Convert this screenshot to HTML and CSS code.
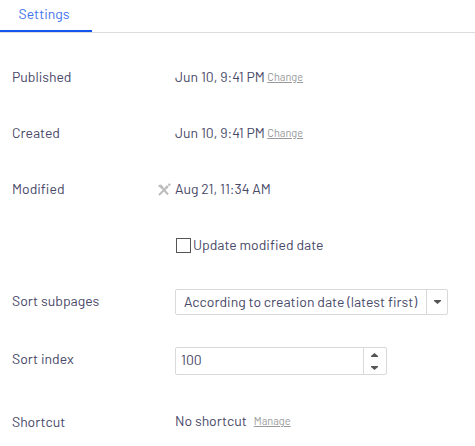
FILE: index.html
```html
<!DOCTYPE html>
<html lang="en">
<head>
<meta charset="utf-8">
<title>Settings</title>
<link rel="stylesheet" href="styles.css">
</head>
<body>
<nav class="tabs"><a class="tab">Settings</a></nav>
<main class="form">
  <div class="row"><span class="label">Published</span><div class="value"><span>Jun 10, 9:41 PM</span><a class="link">Change</a></div></div>
  <div class="row"><span class="label">Created</span><div class="value"><span>Jun 10, 9:41 PM</span><a class="link">Change</a></div></div>
  <div class="row"><span class="label">Modified</span><div class="value">
    <svg class="tools" width="13" height="13" viewBox="0 0 13 13"><path d="M1 12L9 4M4 4.500L10 11.500" stroke="#bdbdbd" stroke-width="2"/><path d="M.500 2l2.500-.5L5.500 4 4 6 .500 3.500z" fill="#bdbdbd"/><circle cx="11.300" cy="1.700" r="1.300" fill="#bdbdbd"/><circle cx="9" cy="4" r="1.400" fill="#bdbdbd"/></svg>
    <span>Aug 21, 11:34 AM</span></div></div>
  <div class="row"><span class="label"></span><label class="value"><span class="checkbox"></span><span>Update modified date</span></label></div>
  <div class="row"><span class="label">Sort subpages</span><div class="value"><div class="select"><span class="select-text">According to creation date (latest first)</span><span class="toggle"><svg width="7" height="4" viewBox="0 0 7 4"><path d="M0 0h7v1L3.500 4 0 1z" fill="#555"/></svg></span></div></div></div>
  <div class="row row-index"><span class="label">Sort index</span><div class="value"><div class="number"><span class="number-text">100</span><span class="spinner"><svg width="7" height="4" viewBox="0 0 7 4"><path d="M0 4h7V3L3.500 0 0 3z" fill="#555"/></svg><svg width="7" height="4" viewBox="0 0 7 4"><path d="M0 0h7v1L3.500 4 0 1z" fill="#555"/></svg></span></div></div></div>
  <div class="row row-shortcut"><span class="label">Shortcut</span><div class="value value-shortcut"><span>No shortcut</span><a class="link manage">Manage</a></div></div>
</main>
</body>
</html>
```
FILE: styles.css
```css
* { box-sizing: border-box; }
body { margin: 0; height: 446px; overflow: hidden; background: #fff; color: #484868; font: 400 14px/18px Barlow, Roboto, sans-serif; white-space: nowrap; }
.tabs { height: 33px; border-bottom: 1px solid #dcdcdc; display: flex; }
.tab { width: 92px; height: 32px; padding: 5px 0 0 18.5px; border-bottom: 2px solid #1557ed; color: #3f73ee; }
.form { padding-top: 16px; }
.row { height: 56px; display: grid; grid-template-columns: 163px 1fr; align-items: center; padding-left: 12px; }
.row-index { height: 60px; }
.row-shortcut { height: 66px; }
.value { display: flex; align-items: center; position: relative; }
.value-shortcut { padding-bottom: 2px; }
.link { color: #999; font-size: 11px; text-decoration: underline; margin-left: 2.5px; }
.manage { margin-left: 7px; }
.tools { position: absolute; left: -17px; top: 3px; }
.checkbox { width: 15px; height: 15px; border: 1px solid #555; margin: 0 2px 0 1px; }
.select { display: flex; width: 273px; height: 26px; margin-top: 2px; border: 1px solid #d9d9d9; border-radius: 2px; align-items: center; }
.select-text { flex: 1; padding-left: 8px; }
.toggle { width: 21px; height: 24px; border-left: 1px solid #d9d9d9; display: flex; align-items: center; justify-content: center; }
.number { display: flex; width: 212px; height: 28px; margin-top: 4px; border: 1px solid #d9d9d9; border-radius: 2px; align-items: center; }
.number-text { flex: 1; padding-left: 5px; line-height: 20px; padding-bottom: 2px; }
.spinner { width: 23px; height: 26px; border-left: 1px solid #d9d9d9; display: flex; flex-direction: column; align-items: center; justify-content: space-between; padding: 5px 1px 4px 0; }
```
